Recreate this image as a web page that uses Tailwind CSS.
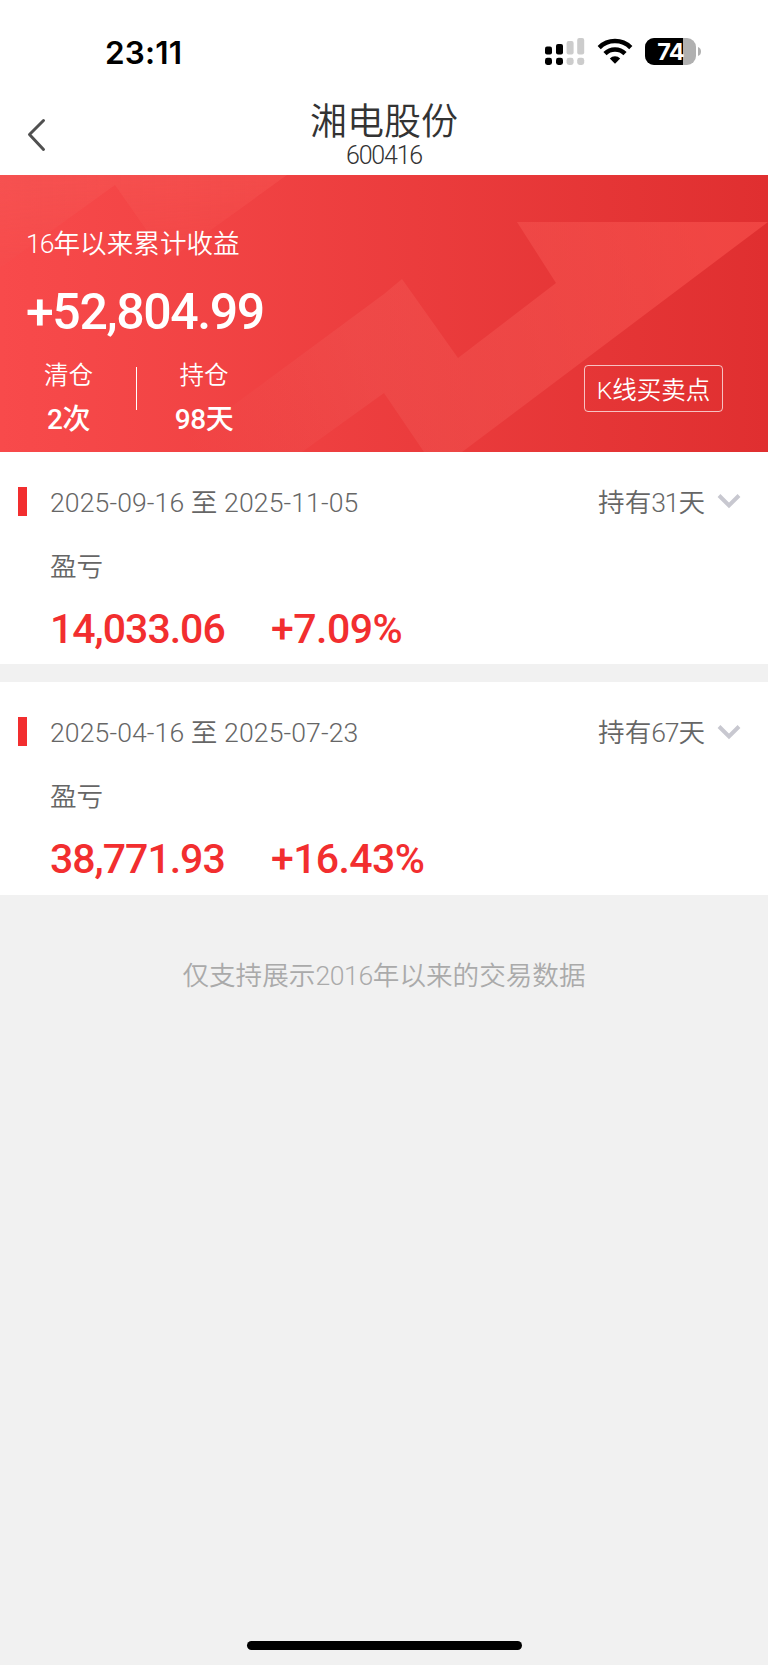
<!DOCTYPE html>
<html lang="zh-CN">
<head>
    <meta charset="UTF-8">
    <meta name="viewport" content="width=device-width, initial-scale=1.0">
    <title>湘电股份 600416</title>
    <script src="https://cdn.jsdelivr.net/npm/@tailwindcss/browser@4"></script>
    <style>
        body {
            font-family: Roboto, 'Noto Sans CJK SC', sans-serif;
        }
    </style>
</head>
<body class="bg-[#f1f1f1]">
    <div class="w-[768px] h-[1665px] flex flex-col overflow-hidden">

        <!-- Status bar -->
        <div class="h-[96px] shrink-0 bg-white flex items-start justify-between pl-[105px] pr-[67px] pt-[37px]">
            <span class="h-8 leading-8 text-[31.500px] font-semibold text-black font-['Inter'] tracking-[0.2px]">23:11</span>
            <div class="flex items-start">
                <svg class="w-[41px] h-[30px]" viewBox="0 0 41 30">
                    <g fill="#000">
                        <rect x="0" y="9.5" width="7" height="8" rx="2"/>
                        <rect x="0" y="20.8" width="7" height="7.2" rx="2.4"/>
                        <rect x="11" y="7" width="7" height="10.5" rx="2"/>
                        <rect x="11" y="20.8" width="7" height="7.2" rx="2.4"/>
                    </g>
                    <g fill="#ccc">
                        <rect x="21.6" y="4" width="7" height="13.5" rx="2"/>
                        <rect x="21.6" y="20.8" width="7" height="7.2" rx="2.4"/>
                        <rect x="32.2" y="1" width="7" height="16.5" rx="2"/>
                        <rect x="32.2" y="20.8" width="7" height="7.2" rx="2.4"/>
                    </g>
                </svg>
                <svg class="ml-[11px] w-[36px] h-[30px]" viewBox="0 0 36 30">
                    <g fill="none" stroke="#000" stroke-width="4.5">
                        <path d="M2.2 10.6a22.5 22.5 0 0 1 31.6 0"/>
                        <path d="M8 16.6a14.2 14.2 0 0 1 20 0"/>
                    </g>
                    <path d="M18 26.8l-5.2-5.3a7.4 7.4 0 0 1 10.4 0z"/>
                </svg>
                <div class="ml-[12px] relative w-[51px] h-[27px] mt-[1px] rounded-[9px] overflow-hidden bg-[#b0b0b0]">
                    <div class="w-[38px] h-full bg-black"></div>
                    <span class="absolute inset-0 text-center leading-[27px] text-[23.500px] font-bold text-white font-['Inter'] tracking-[-0.8px]">74</span>
                </div>
                <svg class="ml-[2px] mt-[10px] w-[3px] h-[9px]" viewBox="0 0 4 9" preserveAspectRatio="none"><path d="M0 0q4 1 4 4.500T0 9z" fill="#b0b0b0"/></svg>
            </div>
        </div>

        <!-- Nav -->
        <header class="h-[79px] shrink-0 bg-white grid grid-cols-[60px_1fr_60px] text-[#333]">
            <svg class="ml-[26px] mt-[22px] w-[20px] h-[34px]" viewBox="0 0 20 34" fill="none" stroke="#505050" stroke-width="3" stroke-linecap="round" stroke-linejoin="round"><path d="M17.5 2.5L3.500 16.500L17.500 31.500"/></svg>
            <div class="flex flex-col items-center pt-[4px]">
                <h1 class="h-[46px] leading-[46px] text-[37px] font-[350]">湘电股份</h1>
                <p class="-mt-[2px] h-6 leading-6 text-[25px] font-[350] tracking-[-1.2px]">600416</p>
            </div>
        </header>

        <!-- Summary banner -->
        <section class="relative h-[276.500px] shrink-0 text-white bg-linear-to-r from-[#f84a4b] to-[#e02f30]">
            <svg class="absolute inset-0 w-[768px] h-[276.500px]" viewBox="0 0 768 276.5">
                <defs>
                    <linearGradient id="arrow" gradientUnits="userSpaceOnUse" x1="190" y1="277" x2="700" y2="47">
                        <stop offset="0" stop-color="#f0605c" stop-opacity="0"/>
                        <stop offset="0.35" stop-color="#f2605c" stop-opacity="0.3"/>
                        <stop offset="1" stop-color="#ff5a54" stop-opacity="0.5"/>
                    </linearGradient>
                    <linearGradient id="corner" x1="0" y1="0" x2="1" y2="0">
                        <stop offset="0" stop-color="#f2605c" stop-opacity="0.35"/>
                        <stop offset="1" stop-color="#ff6a62" stop-opacity="0.25"/>
                    </linearGradient>
                    <linearGradient id="fade" x1="0" y1="0" x2="0" y2="1">
                        <stop offset="0" stop-color="#fff"/>
                        <stop offset="1" stop-color="#fff" stop-opacity="0.1"/>
                    </linearGradient>
                    <mask id="fadeMask"><rect width="300" height="100" fill="url(#fade)"/></mask>
                </defs>
                <path d="M0 0H287L168 86L115 10L0 93Z" fill="url(#corner)" mask="url(#fadeMask)"/>
                <path d="M517 47H768L462 277H424L384 218L302 277H170L384 119L402 104L458 183L556 108Z" fill="url(#arrow)"/>
            </svg>
            <div class="relative flex flex-col pl-[26px]">
                <p class="mt-[49px] h-10 leading-10 text-[26.6px] font-[350]"><span class="tracking-[-1px]">16</span>年以来累计收益</p>
                <p class="mt-[20px] h-[56px] leading-[56px] text-[50px] font-medium tracking-[-1.4px]">+52,804.99</p>
                <div class="flex items-start">
                    <div class="w-[85px] flex flex-col items-center">
                        <p class="mt-[16px] h-[40px] leading-[40px] text-[24.500px] font-[350]">清仓</p>
                        <p class="mt-[4px] h-[40px] leading-[40px] text-[28px] font-medium tracking-[-0.4px]">2次</p>
                    </div>
                    <div class="mt-[27px] w-px h-[43px] bg-white translate-x-[25px]"></div>
                    <div class="w-[90px] ml-[47px] flex flex-col items-center">
                        <p class="mt-[16px] h-[40px] leading-[40px] text-[24.500px] font-[350]">持仓</p>
                        <p class="mt-[4px] h-[40px] leading-[40px] text-[28px] font-medium tracking-[-0.4px]">98天</p>
                    </div>
                    <button class="ml-auto mr-[45px] mt-[25px] w-[139px] h-[47px] border border-white/70 rounded-[4px] text-[24.500px] font-[350] leading-[45px] pt-[2px]">K线买卖点</button>
                </div>
            </div>
        </section>

        <!-- Records -->
        <section class="h-[212.500px] shrink-0 bg-white pl-[18px]">
            <div class="flex items-center pt-[32px] h-[67px] text-[#666]">
                <div class="w-[9px] h-[29px] bg-[#f22e2f]"></div>
                <p class="ml-[23px] mt-[3px] text-[26.6px] font-[350] tracking-[0.1px]">2025-09-16 至 2025-11-05</p>
                <p class="ml-auto mt-[3px] text-[26.6px] font-[350]">持有<span class="tracking-[-1.2px]">31</span>天</p>
                <svg class="ml-[12px] mr-[27px] w-[24px] h-[16px]" viewBox="0 0 24 16" fill="none" stroke="#c8c8d0" stroke-width="4"><path d="M2 2.500L12 12.500L22 2.500"/></svg>
            </div>
            <p class="ml-[32px] mt-[28px] h-[40px] leading-[40px] text-[26.600px] font-[350] text-[#666]">盈亏</p>
            <div class="ml-[32px] mt-[17px] h-[50px] leading-[50px] flex text-[41px] font-medium text-[#f22e2f] tracking-[-1px]">
                <span class="w-[221px]">14,033.06</span>
                <span class="tracking-[-0.5px]">+7.09%</span>
            </div>
        </section>

        <div class="h-[18px] shrink-0"></div>

        <section class="h-[212.500px] shrink-0 bg-white pl-[18px]">
            <div class="flex items-center pt-[32px] h-[67px] text-[#666]">
                <div class="w-[9px] h-[29px] bg-[#f22e2f]"></div>
                <p class="ml-[23px] mt-[3px] text-[26.6px] font-[350] tracking-[0.1px]">2025-04-16 至 2025-07-23</p>
                <p class="ml-auto mt-[3px] text-[26.6px] font-[350]">持有<span class="tracking-[-1.2px]">67</span>天</p>
                <svg class="ml-[12px] mr-[27px] w-[24px] h-[16px]" viewBox="0 0 24 16" fill="none" stroke="#c8c8d0" stroke-width="4"><path d="M2 2.500L12 12.500L22 2.500"/></svg>
            </div>
            <p class="ml-[32px] mt-[28px] h-[40px] leading-[40px] text-[26.600px] font-[350] text-[#666]">盈亏</p>
            <div class="ml-[32px] mt-[17px] h-[50px] leading-[50px] flex text-[41px] font-medium text-[#f22e2f] tracking-[-1px]">
                <span class="w-[221px]">38,771.93</span>
                <span class="tracking-[-0.6px]">+16.43%</span>
            </div>
        </section>

        <p class="mt-[61px] h-10 leading-10 text-center text-[26.600px] font-[350] text-[#aaa]">仅支持展示<span class="tracking-[-0.4px]">2016</span>年以来的交易数据</p>

        <!-- Home indicator -->
        <div class="mt-auto mb-[15px] mx-auto w-[275px] h-[9px] shrink-0 rounded-full bg-black"></div>
    </div>
</body>
</html>
